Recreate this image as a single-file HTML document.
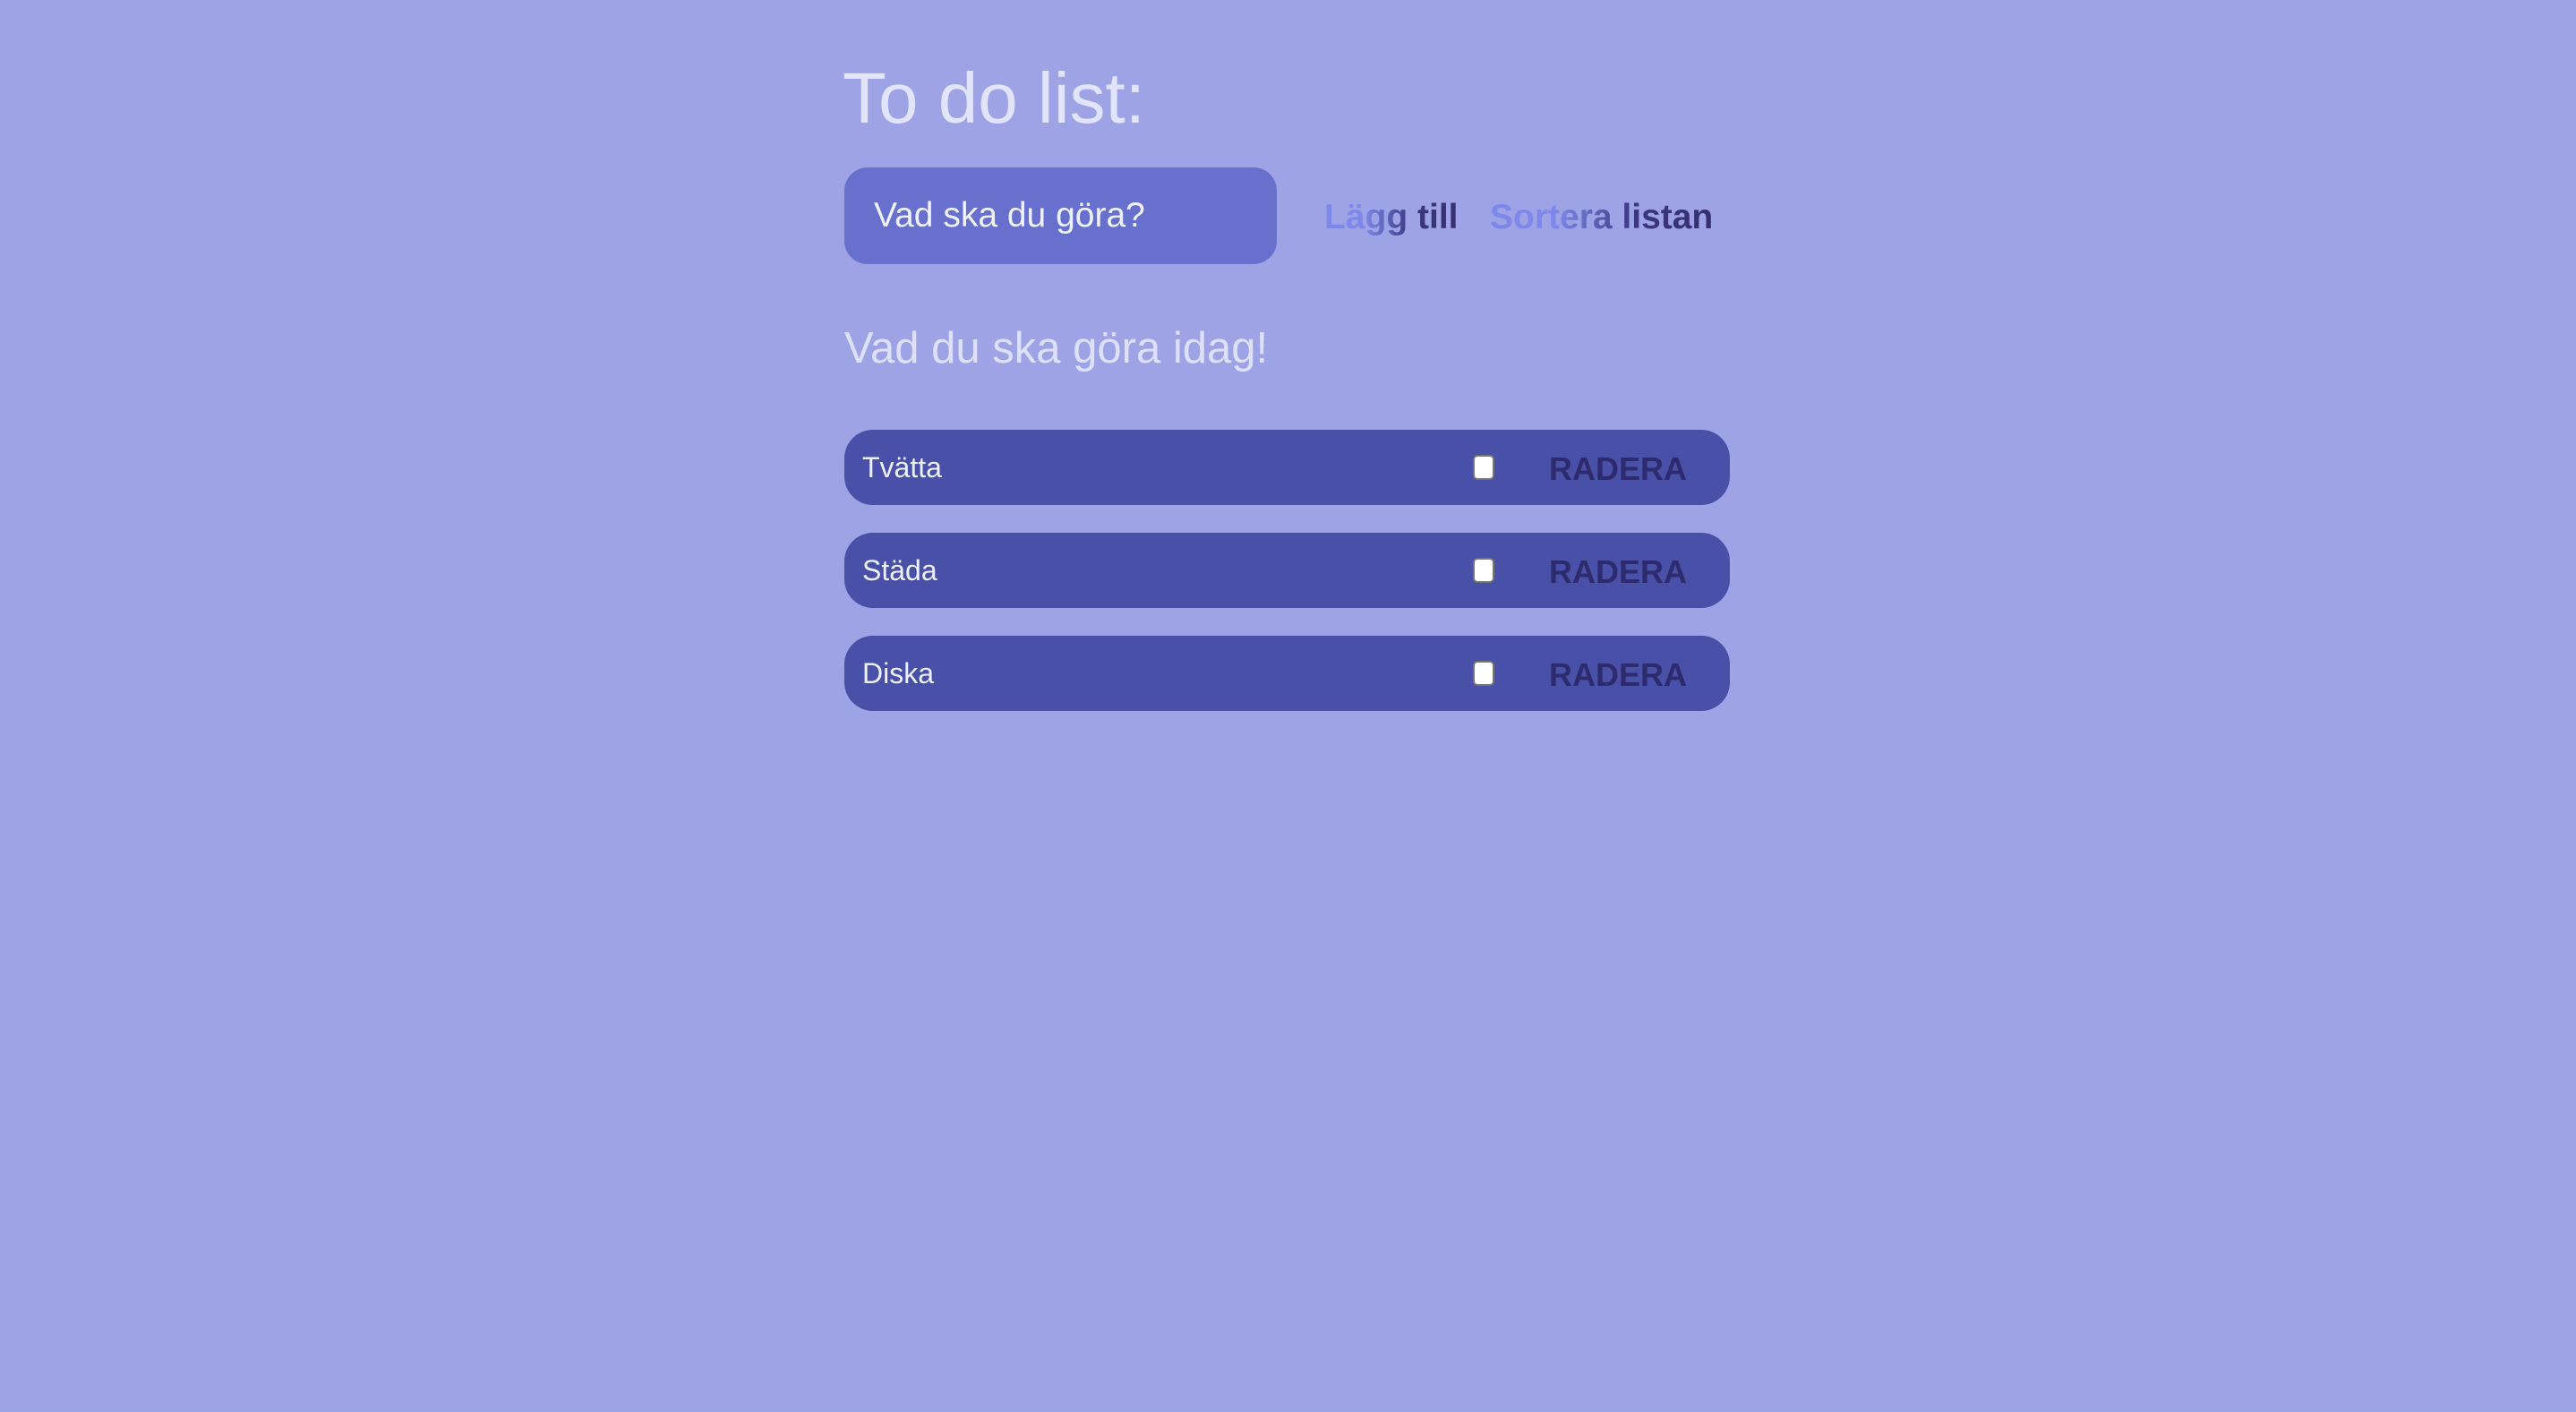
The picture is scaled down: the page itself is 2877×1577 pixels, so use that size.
<!DOCTYPE html>
<html><head><meta charset="utf-8"><style>
html,body{margin:0;padding:0;}
body{width:2877px;height:1577px;background:#9da3e5;font-family:"Liberation Sans",Arial,sans-serif;position:relative;overflow:hidden;}
.a{position:absolute;white-space:nowrap;}
h1{position:absolute;left:941px;top:60px;margin:0;font-weight:normal;font-size:80px;line-height:100px;color:#e1e4fa;}
.inp{position:absolute;left:943px;top:187px;width:483px;height:108px;border-radius:26px;background:#6770cc;}
.inp span{position:absolute;left:33px;top:33px;font-size:39px;line-height:42px;color:#f0f1ff;}
.btn{font-weight:bold;font-size:39px;line-height:42px;top:222px;background:linear-gradient(90deg,#7d88ea 0%,#7d88ea 30%,#3c3780 65%,#35306f 100%);-webkit-background-clip:text;background-clip:text;color:transparent;}
h2{position:absolute;left:943px;top:359px;margin:0;font-weight:normal;font-size:49px;line-height:60px;color:#dde0f8;}
.row{position:absolute;left:943px;width:989px;height:84px;border-radius:32px;background:#4850a8;}
.row .t{position:absolute;left:20px;top:24px;font-size:32px;line-height:36px;color:#eef0ff;}
.row .cb{position:absolute;left:702px;top:28px;width:20px;height:24px;border:2px solid #777;border-radius:5px;background:#fff;}
.row .r{position:absolute;left:787px;top:24px;font-size:36px;line-height:40px;font-weight:bold;color:#2e2a6e;}
</style></head><body>
<h1>To do list:</h1>
<div class="inp"><span>Vad ska du göra?</span></div>
<div class="a btn" style="left:1479px">Lägg till</div>
<div class="a btn" style="left:1664px">Sortera listan</div>
<h2>Vad du ska göra idag!</h2>
<div class="row" style="top:480px"><span class="t">Tvätta</span><div class="cb"></div><span class="r">RADERA</span></div>
<div class="row" style="top:595px"><span class="t">Städa</span><div class="cb"></div><span class="r">RADERA</span></div>
<div class="row" style="top:710px"><span class="t">Diska</span><div class="cb"></div><span class="r">RADERA</span></div>
</body></html>
